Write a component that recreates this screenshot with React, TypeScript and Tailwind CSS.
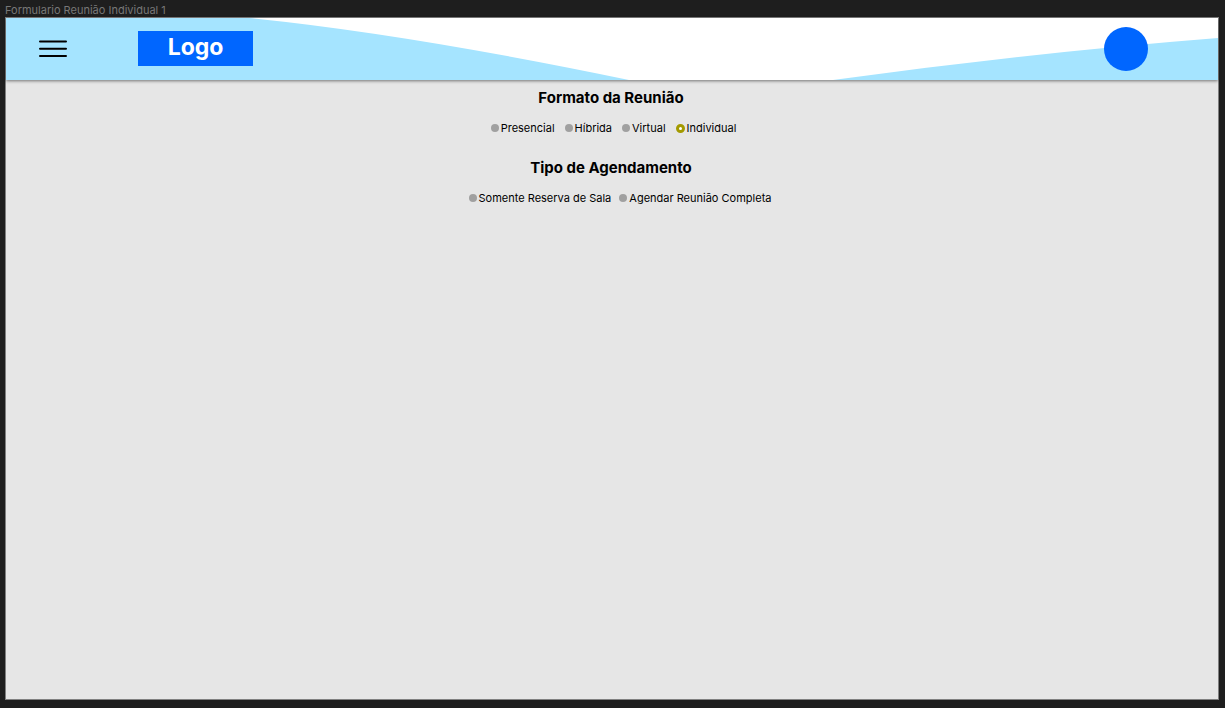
import { useState } from 'react';

type ChoiceGroupProps = {
  title: string;
  name: string;
  options: string[];
  initial?: string;
  rowClass: string;
};

function ChoiceGroup({ title, name, options, initial, rowClass }: ChoiceGroupProps) {
  const [selected, setSelected] = useState(initial);
  return (
    <fieldset className="flex w-full flex-col items-center">
      <legend className="mx-auto pr-[2px] text-[15px] leading-5 font-bold">{title}</legend>
      <div className={`mt-[10px] flex flex-wrap justify-center ${rowClass}`}>
        {options.map((option) => (
          <label key={option} className="flex items-center gap-[2px] text-[11px] leading-5">
            <input
              type="radio"
              name={name}
              checked={selected === option}
              onChange={() => setSelected(option)}
              className="size-2 shrink-0 appearance-none rounded-full bg-[#a0a0a0] checked:size-[9px] checked:border-[3px] checked:border-[#a39a00] checked:bg-white"
            />
            {option}
          </label>
        ))}
      </div>
    </fieldset>
  );
}

export default function App() {
  return (
    <div className="flex min-h-screen flex-col bg-[#1e1e1e] pr-[6px] pb-2 pl-[5px] font-['Inter',sans-serif]">
      <p className="h-[17px] text-[11px] leading-5 text-[#777777]">Formulario Reunião Individual 1</p>
      <div className="flex flex-1 flex-col border border-[#808080] bg-[#e6e6e6] text-black">
        <header className="relative flex h-[62px] items-center bg-white pr-[70px] pl-[33px] shadow-[0_1px_3px_rgba(0,0,0,0.5)]">
          <svg
            className="absolute inset-0 size-full"
            viewBox="0 0 1212 62"
            preserveAspectRatio="none"
            fill="#a5e4ff"
            aria-hidden="true"
          >
            <path d="M0 0H243Q402 16 623 62H0Z" />
            <path d="M827 62Q1022 35 1212 20V62Z" />
          </svg>
          <button type="button" aria-label="Menu" className="relative">
            <svg width="28" height="20" viewBox="0 0 28 20" stroke="#000" strokeWidth="2" strokeLinecap="round">
              <path d="M1 2.5H27M1 9.8H27M1 17H27" />
            </svg>
          </button>
          <a
            href="#"
            className="relative mb-[2px] ml-[71px] flex h-[35px] w-[115px] items-center justify-center bg-[#0066ff] pb-[2px] text-[23px] leading-7 font-bold text-white"
          >
            Logo
          </a>
          <button type="button" aria-label="Perfil" className="relative ml-auto size-11 rounded-full bg-[#0066ff]" />
        </header>
        <main className="flex flex-col items-center gap-5 pt-2">
          <ChoiceGroup
            title="Formato da Reunião"
            name="formato"
            options={['Presencial', 'Híbrida', 'Virtual', 'Individual']}
            initial="Individual"
            rowClass="gap-x-[10px] pl-[3px]"
          />
          <ChoiceGroup
            title="Tipo de Agendamento"
            name="tipo"
            options={['Somente Reserva de Sala', 'Agendar Reunião Completa']}
            rowClass="gap-x-2 pl-4"
          />
        </main>
      </div>
    </div>
  );
}
